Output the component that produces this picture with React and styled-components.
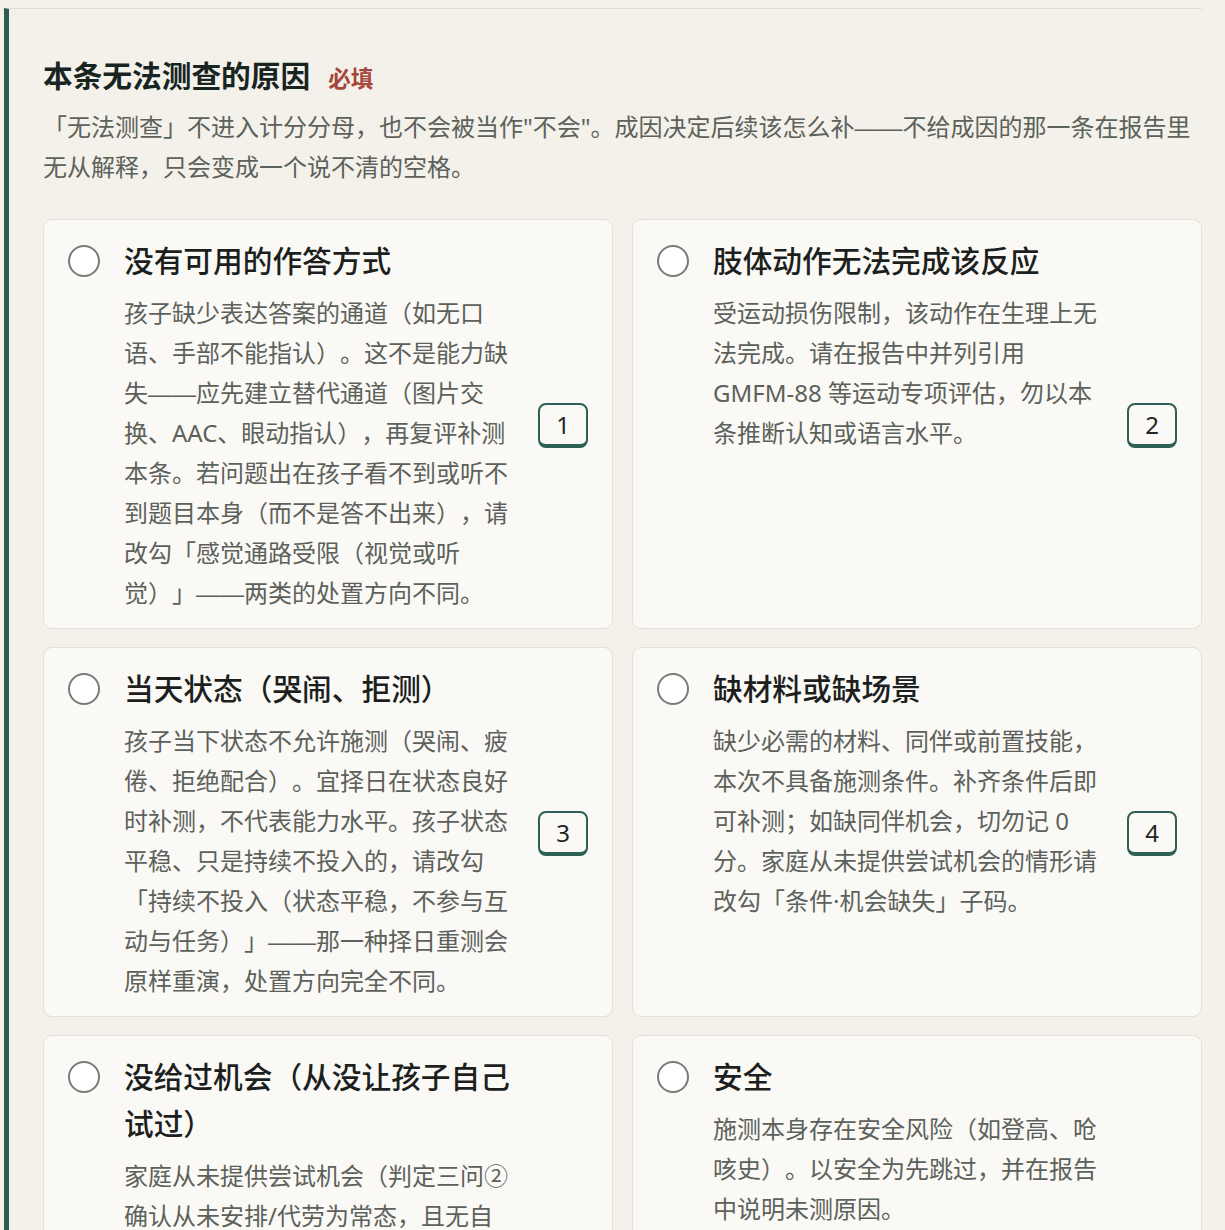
import React from "react";
import styled, { createGlobalStyle } from "styled-components";

const Global = createGlobalStyle`
  html, body {
    margin: 0;
    padding: 0;
    background: #f3f1ea;
  }
  body {
    font-family: "Noto Sans", "Noto Sans CJK SC", sans-serif;
    text-spacing-trim: space-all;
    -webkit-font-smoothing: antialiased;
  }
`;

const Page = styled.div`
  padding: 8px 20px 0 4px;
  min-height: 1230px;
  box-sizing: border-box;
`;

const Panel = styled.section`
  border-top: 1px solid #e2ddd0;
  border-left: 5px solid #2b5d51;
  border-top-right-radius: 6px;
  padding: 44px 3px 40px 34px;
`;

const HeadRow = styled.div`
  display: flex;
  align-items: baseline;
  gap: 18px;
`;

const Heading = styled.h2`
  margin: 0;
  font-size: 29.7px;
  line-height: 45px;
  font-weight: 700;
  color: #17241f;
`;

const Required = styled.span`
  font-size: 22.5px;
  font-weight: 700;
  color: #a6453a;
`;

const Intro = styled.p`
  margin: 9px 0 0;
  font-size: 24px;
  line-height: 40px;
  color: #5c615b;
`;

const Dash = styled.span`
  font-family: "Liberation Sans", sans-serif;
  line-height: 1;
`;

const Grid = styled.div`
  margin-top: 32px;
  display: grid;
  grid-template-columns: 1fr 1fr;
  column-gap: 19px;
  row-gap: 18px;
`;

const Card = styled.label`
  display: grid;
  grid-template-columns: 32px 1fr 50px;
  column-gap: 24px;
  align-items: start;
  padding: 17px 24px 15px;
  background: #faf9f5;
  border: 1px solid #e4e0d5;
  border-radius: 9px;
  cursor: pointer;
`;

const Radio = styled.span`
  box-sizing: border-box;
  width: 32px;
  height: 32px;
  margin-top: 8px;
  border-radius: 50%;
  border: 2px solid #7a7a78;
  background: #fff;
`;

const Body = styled.div`
  min-width: 0;
`;

const Title = styled.div`
  font-size: 29.7px;
  line-height: 47px;
  font-weight: 500;
  color: #1c1f1d;
`;

const Desc = styled.div`
  margin-top: 9px;
  font-size: 24px;
  line-height: 40px;
  color: #5c615b;
`;

const Key = styled.span`
  align-self: center;
  box-sizing: border-box;
  width: 50px;
  height: 45px;
  display: flex;
  align-items: center;
  justify-content: center;
  border: 2px solid #2e5f54;
  border-bottom-width: 4px;
  border-radius: 8px;
  background: #faf9f5;
  font-family: "Noto Sans", sans-serif;
  font-size: 24px;
  color: #1f2623;
`;

function Rich({ text }) {
  const parts = text.split("——");
  return parts.map((p, i) => (
    <React.Fragment key={i}>
      {i > 0 && <Dash>——</Dash>}
      {p}
    </React.Fragment>
  ));
}

const options = [
  {
    title: "没有可用的作答方式",
    desc:
      "孩子缺少表达答案的通道（如无口语、手部不能指认）。这不是能力缺失——应先建立替代通道（图片交换、AAC、眼动指认），再复评补测本条。若问题出在孩子看不到或听不到题目本身（而不是答不出来），请改勾「感觉通路受限（视觉或听觉）」——两类的处置方向不同。",
  },
  {
    title: "肢体动作无法完成该反应",
    desc:
      "受运动损伤限制，该动作在生理上无法完成。请在报告中并列引用 GMFM-88 等运动专项评估，勿以本条推断认知或语言水平。",
  },
  {
    title: "当天状态（哭闹、拒测）",
    desc:
      "孩子当下状态不允许施测（哭闹、疲倦、拒绝配合）。宜择日在状态良好时补测，不代表能力水平。孩子状态平稳、只是持续不投入的，请改勾「持续不投入（状态平稳，不参与互动与任务）」——那一种择日重测会原样重演，处置方向完全不同。",
  },
  {
    title: "缺材料或缺场景",
    desc:
      "缺少必需的材料、同伴或前置技能，本次不具备施测条件。补齐条件后即可补测；如缺同伴机会，切勿记 0 分。家庭从未提供尝试机会的情形请改勾「条件·机会缺失」子码。",
  },
  {
    title: "没给过机会（从没让孩子自己试过）",
    desc:
      "家庭从未提供尝试机会（判定三问②确认从未安排/代劳为常态，且无自主尝试的记录）。这不是能力缺失，也不是孩子拒绝——应先在日常中安排几次练习机会，观察一到两周后再复评补测本条。若家庭已提供机会但孩子仍无法完成，请按实际表现评分，不要勾选本项。",
  },
  {
    title: "安全",
    desc:
      "施测本身存在安全风险（如登高、呛咳史）。以安全为先跳过，并在报告中说明未测原因。",
  },
];

export default function App() {
  return (
    <>
      <Global />
      <Page>
        <Panel>
          <HeadRow>
            <Heading>本条无法测查的原因</Heading>
            <Required>必填</Required>
          </HeadRow>
          <Intro>
            <Rich text={'「无法测查」不进入计分分母，也不会被当作"不会"。成因决定后续该怎么补——不给成因的那一条在报告里无从解释，只会变成一个说不清的空格。'} />
          </Intro>
          <Grid role="radiogroup">
            {options.map((o, i) => (
              <Card key={i}>
                <Radio />
                <Body>
                  <Title>{o.title}</Title>
                  <Desc>
                    <Rich text={o.desc} />
                  </Desc>
                </Body>
                <Key>{i + 1}</Key>
              </Card>
            ))}
          </Grid>
        </Panel>
      </Page>
    </>
  );
}
